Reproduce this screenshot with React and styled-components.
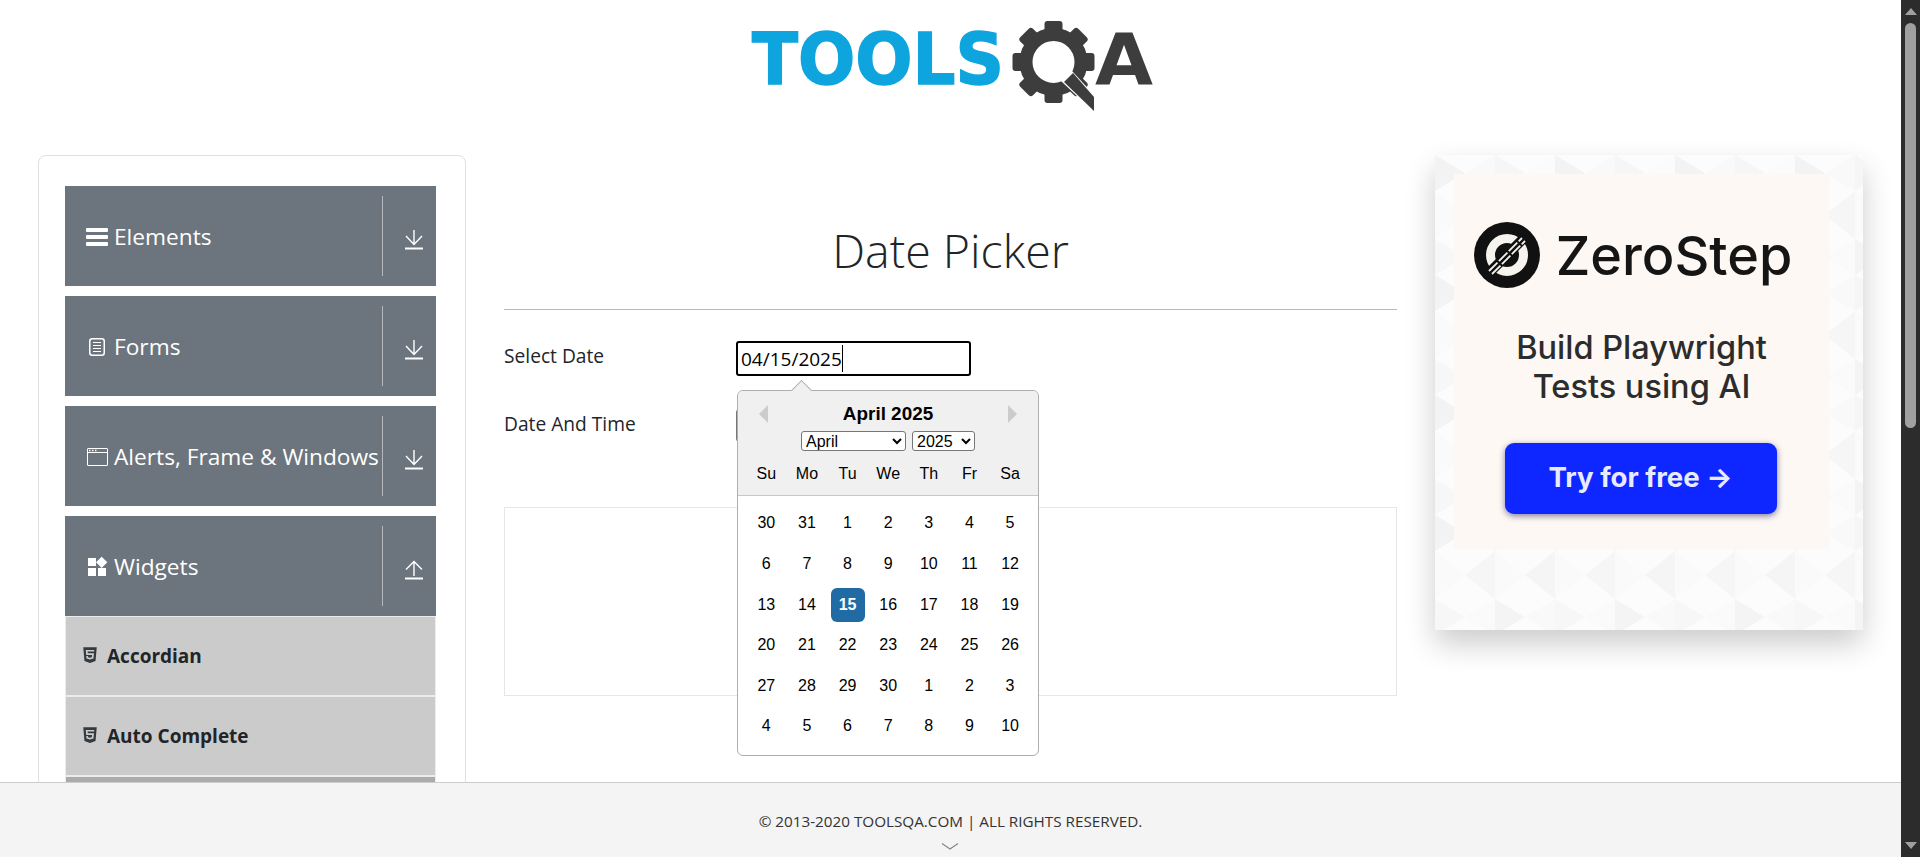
import React from 'react';
import styled, { createGlobalStyle } from 'styled-components';
import { FaHtml5 } from 'react-icons/fa';
import { MdWidgets } from 'react-icons/md';

const GlobalStyle = createGlobalStyle`
  html, body {
    margin: 0;
    height: 100%;
    overflow: hidden;
    background: #fff;
  }
  * {
    box-sizing: border-box;
  }
`;

const Viewport = styled.div`
  display: flex;
  height: 100vh;
  overflow: hidden;
  font-family: 'Open Sans', 'Liberation Sans', sans-serif;
  color: #212529;
`;
const Page = styled.div`
  flex: 1;
  min-width: 0;
  overflow: hidden;
`;
const Header = styled.header`
  height: 155px;
  padding: 20px 0 0 4px;
  display: flex;
  justify-content: center;
  align-items: flex-start;
`;
const Columns = styled.div`
  display: flex;
  align-items: flex-start;
  padding: 0 38px;
  gap: 38px;
`;

/* left menu */
const Sidebar = styled.aside`
  flex: none;
  width: 428px;
  padding: 30px 29px 30px 26px;
  border: 1px solid #e0e0e0;
  border-radius: 8px;
`;
const Group = styled.div`
  margin-bottom: 10px;
`;
const GroupHeader = styled.div`
  height: 100px;
  padding: 10px 0 10px 20px;
  display: flex;
  align-items: center;
  background: #6c757d;
  color: #fff;
`;
const GroupIcon = styled.span`
  flex: none;
  width: 24px;
  margin-right: 5px;
  display: flex;
  justify-content: center;
  padding-top: 2px;
`;
const GroupLabel = styled.div`
  flex: 1;
  min-width: 0;
  font-size: 22.7px;
  white-space: nowrap;
`;
const GroupDivider = styled.div`
  flex: none;
  width: 1px;
  height: 80px;
  background: rgba(255, 255, 255, 0.5);
`;
const ArrowBox = styled.div`
  flex: none;
  width: 53px;
  height: 80px;
  display: flex;
  justify-content: center;
  align-items: center;
  padding: 8px 0 0 9px;
`;
const MenuItem = styled.div`
  height: 80px;
  padding-left: 15px;
  display: flex;
  align-items: center;
  gap: 8px;
  background: ${(p) => (p.$active ? '#ababab' : '#cbcbcb')};
  border: 1px solid #ececec;
  font-size: 19px;
  font-weight: 700;
  color: #212529;
  svg {
    color: #343a40;
    margin-top: -2px;
  }
`;

/* centre column */
const Main = styled.main`
  flex: none;
  width: 893px;
`;
const Title = styled.h1`
  margin: 0;
  padding: 66px 0 30px;
  font-size: 46.5px;
  line-height: 58px;
  font-weight: 300;
  text-align: center;
  border-bottom: 1px solid #bbb;
`;
const FormRow = styled.div`
  display: flex;
  align-items: flex-start;
  margin-top: ${(p) => p.$gap}px;
`;
const FieldLabel = styled.label`
  flex: none;
  width: 232px;
  font-size: 19.2px;
  line-height: 30px;
`;
const FieldWrap = styled.div`
  position: relative;
  width: 235px;
`;
const FocusedInput = styled.div`
  height: 35px;
  padding-left: 3px;
  display: flex;
  align-items: center;
  border: 2px solid #000;
  border-radius: 3px;
  font-size: 19px;
  color: #000;
`;
const Caret = styled.span`
  width: 1px;
  height: 27px;
  background: #000;
`;
const PlainInput = styled.input`
  display: block;
  width: 235px;
  height: 33px;
  padding: 0 4px;
  border: 1px solid #767676;
  border-radius: 3px;
  font: 19px 'Open Sans', sans-serif;
`;
const ResultBox = styled.div`
  height: 189px;
  margin-top: 65px;
  border: 1px solid #e6e6e6;
`;

/* date picker popup */
const Popup = styled.div`
  position: absolute;
  top: 49px;
  left: 1px;
  z-index: 5;
  width: 302px;
  border: 1px solid #aeaeae;
  border-radius: 6px;
  background: #fff;
  font-family: 'Liberation Sans', Arial, sans-serif;
  color: #000;
`;
const Pointer = styled.div`
  position: absolute;
  top: -8px;
  left: 56px;
  width: 15px;
  height: 15px;
  background: #f0f0f0;
  border-top: 1px solid #aeaeae;
  border-left: 1px solid #aeaeae;
  transform: rotate(45deg);
`;
const CalendarHead = styled.div`
  position: relative;
  padding: 12px 0 4px;
  background: #f0f0f0;
  border-bottom: 1px solid #c8c8c8;
  border-radius: 6px 6px 0 0;
`;
const MonthRow = styled.div`
  display: flex;
  justify-content: space-between;
  align-items: center;
  padding: 0 21px;
  height: 22px;
`;
const MonthTitle = styled.div`
  font-size: 18.9px;
  font-weight: 700;
`;
const NavArrow = styled.span`
  width: 0;
  height: 0;
  border-top: 9px solid transparent;
  border-bottom: 9px solid transparent;
  ${(p) =>
    p.$next
      ? 'border-left: 9px solid #ccc;'
      : 'border-right: 9px solid #ccc;'}
`;
const SelectRow = styled.div`
  display: flex;
  justify-content: center;
  gap: 6px;
  margin-top: 6px;
`;
const MonthSelect = styled.select`
  width: ${(p) => p.$w}px;
  height: 20px;
  padding: 0;
  font: 16px 'Liberation Sans', Arial, sans-serif;
  background: #fff;
  color: #000;
  border: 1px solid #767676;
  border-radius: 3px;
`;
const WeekGrid = styled.div`
  display: grid;
  grid-template-columns: repeat(7, 40.64px);
  padding: 0 8px;
`;
const DayName = styled.div`
  height: 34px;
  margin: 6px 0 0;
  line-height: 34px;
  text-align: center;
  font-size: 16px;
`;
const DayGrid = styled(WeekGrid)`
  padding: 7px 8px 8px;
`;
const Day = styled.div`
  width: 34px;
  height: 34px;
  margin: 3.32px;
  line-height: 34px;
  text-align: center;
  font-size: 16px;
  border-radius: 6px;
  ${(p) => p.$selected && 'background: #216ba5; color: #fff; font-weight: 700;'}
`;

/* right advert */
const Ad = styled.aside`
  position: relative;
  flex: none;
  width: 428px;
  height: 475px;
  padding: 19px 34px 0 19px;
  background: #fcfcfc;
  box-shadow: 0 14px 28px rgba(0, 0, 0, 0.2);
  overflow: hidden;
`;
const AdPattern = styled.svg`
  position: absolute;
  inset: 0;
  width: 100%;
  height: 100%;
`;
const AdPanel = styled.div`
  position: relative;
  height: 375px;
  padding-top: 48px;
  display: flex;
  flex-direction: column;
  align-items: center;
  background: #fdf8f3;
  font-family: Inter, 'Liberation Sans', sans-serif;
`;
const Brand = styled.div`
  display: flex;
  align-items: center;
  gap: 16px;
  height: 66px;
  margin-left: -17px;
  font-size: 54px;
  font-weight: 500;
  color: #151515;
`;
const AdText = styled.div`
  margin-top: 40px;
  font-size: 32.5px;
  line-height: 39px;
  font-weight: 500;
  text-align: center;
  color: #2c2c2c;
`;
const TryButton = styled.div`
  width: 272px;
  height: 71px;
  margin: 37px 2px 0 0;
  padding-bottom: 3px;
  display: flex;
  justify-content: center;
  align-items: center;
  border-radius: 9px;
  background: #0e26ff;
  box-shadow: 0 2px 6px rgba(0, 0, 80, 0.5);
  font-size: 27.6px;
  font-weight: 700;
  color: #e8ebff;
`;

/* bottom bar and page scrollbar */
const Footer = styled.footer`
  position: fixed;
  left: 0;
  right: 19px;
  bottom: 0;
  height: 75px;
  padding-top: 25px;
  display: flex;
  flex-direction: column;
  align-items: center;
  background: #f4f4f4;
  border-top: 1px solid #ccc;
  font-size: 15.25px;
  line-height: 26px;
  color: #333;
  svg {
    margin: 9px 2px 0 0;
  }
`;
const ScrollTrack = styled.div`
  flex: none;
  width: 19px;
  display: flex;
  flex-direction: column;
  align-items: center;
  padding: 8px 0;
  background: #2c2c2c;
`;
const ScrollArrow = styled.span`
  flex: none;
  width: 0;
  height: 0;
  border-left: 6.5px solid transparent;
  border-right: 6.5px solid transparent;
  ${(p) =>
    p.$down
      ? 'border-top: 7px solid #a0a0a0; margin-top: auto;'
      : 'border-bottom: 7px solid #a0a0a0;'}
`;
const ScrollThumb = styled.div`
  width: 11px;
  height: 405px;
  margin-top: 8px;
  background: #a0a0a0;
  border-radius: 6px;
`;

const ToolsLogo = () => {
  const teeth = [0, 45, 90, 135, 180, 225, 270, 315];
  return (
    <svg width="401" height="95" viewBox="752 20 401 95" overflow="visible">
      <text
        x="752"
        y="84"
        fontFamily="DejaVu Sans"
        fontWeight="700"
        fontSize="71"
        textLength="252"
        lengthAdjust="spacingAndGlyphs"
        fill="#0ea5df"
        stroke="#0ea5df"
        strokeWidth="1.5"
      >
        TOOLS
      </text>
      <text
        x="1095"
        y="84"
        fontFamily="DejaVu Sans"
        fontWeight="700"
        fontSize="71"
        textLength="58"
        lengthAdjust="spacingAndGlyphs"
        fill="#3d3d3d"
      >
        A
      </text>
      <g fill="#3d3d3d">
        {teeth.map((a) => (
          <rect
            key={a}
            x="1044.5"
            y="21"
            width="18"
            height="16"
            rx="3"
            transform={`rotate(${a} 1053.5 62)`}
          />
        ))}
      </g>
      <circle cx="1053.5" cy="62" r="27.5" fill="none" stroke="#3d3d3d" strokeWidth="13" />
      <path d="M1061 81L1072 71L1096 97L1096 114Z" fill="#fff" />
      <path d="M1064 82L1073 73L1094 97L1094 111Z" fill="#3d3d3d" />
    </svg>
  );
};

const DownloadArrow = ({ up }) => (
  <svg width="18" height="20" viewBox="0 0 18 20" fill="none" stroke="#fff" strokeWidth="1.4">
    {up ? <path d="M9 16V2M1 9.5L9 1.5L17 9.5" /> : <path d="M9 0V14.5M1 6L9 14.5L17 6" />}
    <path d="M0 18.5H18" strokeWidth="2" />
  </svg>
);

const BarsIcon = () => (
  <svg width="22" height="20" viewBox="0 0 22 20" fill="#fff">
    <rect x="0" y="1" width="22" height="4" rx="1" />
    <rect x="0" y="8" width="22" height="4" rx="1" />
    <rect x="0" y="15" width="22" height="4" rx="1" />
  </svg>
);

const FormIcon = () => (
  <svg width="16" height="18" viewBox="0 0 16 18" fill="none" stroke="#fff">
    <rect x="0.75" y="0.75" width="14.5" height="16.5" rx="2.5" strokeWidth="1.5" />
    <path d="M4 4.5H12M4 7.5H12M4 10.5H12M4 13.5H12" strokeWidth="1" />
  </svg>
);

const WindowIcon = () => (
  <svg width="21" height="18" viewBox="0 0 21 18" fill="none" stroke="#fff">
    <rect x="0.5" y="0.5" width="20" height="17" rx="0.5" />
    <path d="M0.5 4.5H20.5" />
    <path d="M2 2.5H3.5M5 2.5H6.5M8 2.5H9.5" strokeWidth="1.5" />
  </svg>
);

const ZeroStepMark = () => (
  <svg width="66" height="66" viewBox="0 0 66 66" fill="none">
    <circle cx="33" cy="33" r="33" fill="#111" />
    <circle cx="33" cy="33" r="16.5" stroke="#f6f3ee" strokeWidth="9" />
    <path d="M12 54L54 12" stroke="#111" strokeWidth="10" />
    <path d="M15 49L48 16M18 52L51 19" stroke="#f6f3ee" strokeWidth="1.8" strokeDasharray="12 2" />
  </svg>
);

const Triangles = () => (
  <AdPattern>
    <defs>
      <pattern id="tri" width="120" height="120" patternUnits="userSpaceOnUse">
        <path d="M0 0L30 18L0 36Z" fill="#f3f3f3" />
        <path d="M60 0L30 18L60 36Z" fill="#f9f9f9" />
        <path d="M60 0L90 18L60 36Z" fill="#f6f6f6" />
        <path d="M120 0L90 18L120 36Z" fill="#fbfbfb" />
        <path d="M0 36L30 60L0 84Z" fill="#fafafa" />
        <path d="M60 36L30 60L60 84Z" fill="#f6f6f6" />
        <path d="M60 36L90 60L60 84Z" fill="#fafafa" />
        <path d="M120 36L90 60L120 84Z" fill="#f5f5f5" />
        <path d="M0 84L30 102L0 120Z" fill="#f7f7f7" />
        <path d="M60 84L30 102L60 120Z" fill="#fafafa" />
        <path d="M60 84L90 102L60 120Z" fill="#f4f4f4" />
        <path d="M120 84L90 102L120 120Z" fill="#f9f9f9" />
      </pattern>
    </defs>
    <rect width="100%" height="100%" fill="url(#tri)" />
  </AdPattern>
);

const weeks = [
  [30, 31, 1, 2, 3, 4, 5],
  [6, 7, 8, 9, 10, 11, 12],
  [13, 14, 15, 16, 17, 18, 19],
  [20, 21, 22, 23, 24, 25, 26],
  [27, 28, 29, 30, 1, 2, 3],
  [4, 5, 6, 7, 8, 9, 10],
];
const dayNames = ['Su', 'Mo', 'Tu', 'We', 'Th', 'Fr', 'Sa'];
const months = ['January', 'February', 'March', 'April', 'May', 'June', 'July', 'August', 'September', 'October', 'November', 'December'];
const menuItems = ['Accordian', 'Auto Complete', 'Date Picker'];

const groups = [
  { label: 'Elements', icon: <BarsIcon /> },
  { label: 'Forms', icon: <FormIcon /> },
  { label: 'Alerts, Frame & Windows', icon: <WindowIcon /> },
];

const MenuGroup = ({ label, icon, up }) => (
  <GroupHeader>
    <GroupIcon>{icon}</GroupIcon>
    <GroupLabel>{label}</GroupLabel>
    <GroupDivider />
    <ArrowBox>
      <DownloadArrow up={up} />
    </ArrowBox>
  </GroupHeader>
);

const Calendar = () => (
  <Popup>
    <Pointer />
    <CalendarHead>
      <MonthRow>
        <NavArrow />
        <MonthTitle>April 2025</MonthTitle>
        <NavArrow $next />
      </MonthRow>
      <SelectRow>
        <MonthSelect $w={105} defaultValue="April">
          {months.map((m) => (
            <option key={m}>{m}</option>
          ))}
        </MonthSelect>
        <MonthSelect $w={63} defaultValue="2025">
          <option>2024</option>
          <option>2025</option>
          <option>2026</option>
        </MonthSelect>
      </SelectRow>
      <WeekGrid>
        {dayNames.map((d) => (
          <DayName key={d}>{d}</DayName>
        ))}
      </WeekGrid>
    </CalendarHead>
    <DayGrid>
      {weeks.flat().map((d, i) => (
        <Day key={i} $selected={i === 16}>
          {d}
        </Day>
      ))}
    </DayGrid>
  </Popup>
);

const App = () => {
  return (
    <Viewport>
      <GlobalStyle />
      <Page>
        <Header>
          <ToolsLogo />
        </Header>
        <Columns>
          <Sidebar>
            {groups.map((g) => (
              <Group key={g.label}>
                <MenuGroup label={g.label} icon={g.icon} />
              </Group>
            ))}
            <MenuGroup label="Widgets" icon={<MdWidgets size={24} color="#fff" />} up />
            {menuItems.map((item) => (
              <MenuItem key={item} $active={item === 'Date Picker'}>
                <FaHtml5 size={18} />
                {item}
              </MenuItem>
            ))}
          </Sidebar>
          <Main>
            <Title>Date Picker</Title>
            <FormRow $gap={31}>
              <FieldLabel>Select Date</FieldLabel>
              <FieldWrap>
                <FocusedInput>
                  04/15/2025
                  <Caret />
                </FocusedInput>
                <Calendar />
              </FieldWrap>
            </FormRow>
            <FormRow $gap={33}>
              <FieldLabel>Date And Time</FieldLabel>
              <PlainInput readOnly value="April 15, 2025 12:00 PM" />
            </FormRow>
            <ResultBox />
          </Main>
          <Ad>
            <Triangles />
            <AdPanel>
              <Brand>
                <ZeroStepMark />
                ZeroStep
              </Brand>
              <AdText>
                Build Playwright
                <br />
                Tests using AI
              </AdText>
              <TryButton>Try for free →</TryButton>
            </AdPanel>
          </Ad>
        </Columns>
      </Page>
      <Footer>
        © 2013-2020 TOOLSQA.COM | ALL RIGHTS RESERVED.
        <svg width="18" height="7" viewBox="0 0 18 7" fill="none" stroke="#888" strokeWidth="1.2">
          <path d="M1 0.5L9 6L17 0.5" />
        </svg>
      </Footer>
      <ScrollTrack>
        <ScrollArrow />
        <ScrollThumb />
        <ScrollArrow $down />
      </ScrollTrack>
    </Viewport>
  );
};

export default App;
